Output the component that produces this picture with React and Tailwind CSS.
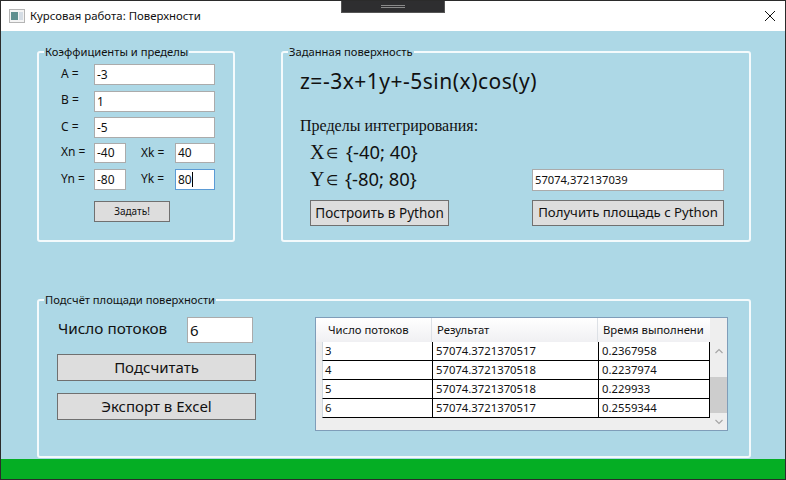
const font = "font-['Noto_Sans',sans-serif]";

function Group({ title, className, children }) {
  return (
    <fieldset className={`border-2 border-[#f4fafc] rounded-[3px] min-w-0 ${className}`}>
      <legend className="ml-[5px] px-[1px] text-[11.2px] leading-[16px] text-[#111]">{title}</legend>
      {children}
    </fieldset>
  );
}

function Field({ className, text, caret, focused, textClass = "text-[12px]" }) {
  return (
    <div className={`flex items-center bg-white border pl-[2px] ${focused ? "border-[#5b9bd5]" : "border-[#ababab]"} ${textClass} ${className}`}>
      <span>{text}</span>
      {caret && <span className="w-[1px] h-[15px] bg-black"></span>}
    </div>
  );
}

function Button({ className, children }) {
  return (
    <button className={`flex items-center justify-center whitespace-nowrap bg-[#dddddd] border border-[#707070] text-[#111] ${className}`}>
      {children}
    </button>
  );
}

const rows = [
  ["3", "57074.3721370517", "0.2367958"],
  ["4", "57074.3721370518", "0.2237974"],
  ["5", "57074.3721370518", "0.229933"],
  ["6", "57074.3721370517", "0.2559344"],
];

function CoeffGroup() {
  return (
    <Group title="Коэффициенты и пределы" className="w-[198px] h-[198px] shrink-0">
      <div className="flex flex-col pl-[22px] pt-[4px] text-[12px] text-[#111]">
        <div className="flex items-center h-[21px]">
          <span className="w-[33px] -mt-[2px]">A =</span>
          <Field className="w-[121px] h-[21px]" text="-3" />
        </div>
        <div className="flex items-center h-[21px] mt-[6px]">
          <span className="w-[33px] -mt-[4px]">B =</span>
          <Field className="w-[121px] h-[21px]" text="1" />
        </div>
        <div className="flex items-center h-[21px] mt-[5px]">
          <span className="w-[33px] -mt-[2px]">C =</span>
          <Field className="w-[121px] h-[21px]" text="-5" />
        </div>
        <div className="flex items-center h-[20px] mt-[5px]">
          <span className="w-[33px] -mt-[2px]">Xn =</span>
          <Field className="w-[32px] h-[20px]" text="-40" />
          <span className="w-[34px] ml-[15px]">Xk =</span>
          <Field className="w-[40px] h-[20px]" text="40" />
        </div>
        <div className="flex items-center h-[21px] mt-[6px]">
          <span className="w-[33px] -mt-[2px]">Yn =</span>
          <Field className="w-[32px] h-[21px]" text="-80" />
          <span className="w-[34px] ml-[15px] -mt-[2px]">Yk =</span>
          <Field className="w-[40px] h-[21px]" text="80" caret focused />
        </div>
        <Button className="w-[76px] h-[21px] mt-[11px] ml-[33px] text-[10px]">Задать!</Button>
      </div>
    </Group>
  );
}

function SurfaceGroup() {
  return (
    <Group title="Заданная поверхность" className="w-[470px] h-[198px] ml-[46px] shrink-0">
      <div className="flex flex-col pl-[17px] text-[#111]">
        <div className="text-[21px] tracking-[0.5px] leading-[28px] mt-[7px] whitespace-nowrap">z=-3x+1y+-5sin(x)cos(y)</div>
        <div className="font-['Liberation_Serif',serif] text-[16px] leading-[18px] mt-[22px]">Пределы интегрирования:</div>
        <div className="flex items-center h-[24px] mt-[5px] pl-[10px] text-[18.4px]">
          <span className="w-[16px] font-['Liberation_Serif',serif] text-[20px]">X</span>
          <span className="w-[20px] text-[14px]">∈</span>
          <span>{"{-40; 40}"}</span>
        </div>
        <div className="flex items-center h-[24px] mt-[3px] pl-[10px] text-[18.4px]">
          <span className="w-[16px] font-['Liberation_Serif',serif] text-[20px]">Y</span>
          <span className="w-[19px] text-[14px]">∈</span>
          <span className="w-[187px]">{"{-80; 80}"}</span>
          <Field className="w-[192px] h-[22px] mt-[2px]" text="57074,372137039" textClass="text-[11.2px]" />
        </div>
        <div className="flex items-center mt-[9px] pl-[10px]">
          <Button className="w-[139px] h-[26px] text-[13.5px]">Построить в Python</Button>
          <Button className="w-[192px] h-[26px] ml-[83px] text-[13.2px]">Получить площадь с Python</Button>
        </div>
      </div>
    </Group>
  );
}

function ResultsTable() {
  return (
    <div className="flex w-[413px] h-[114px] bg-[#eeeeee] border border-[#7f9db9] text-[11.3px] text-[#111]">
      <div className="flex flex-col w-[394px]">
        <div className="flex h-[24px] bg-gradient-to-b from-white to-[#f0f0f3]">
          <div className="w-[116px] pl-[12px] border-r border-[#dde1e6] flex items-center">Число потоков</div>
          <div className="w-[166px] pl-[5px] border-r border-[#dde1e6] flex items-center">Результат</div>
          <div className="flex-1 pl-[5px] flex items-center whitespace-nowrap overflow-hidden">Время выполнени</div>
        </div>
        {rows.map((row) => (
          <div key={row[0]} className="flex h-[19px] pl-[6px]">
            <div className="flex flex-1 bg-white border-b border-black border-l border-l-[#cfd8e0] border-r border-r-black">
              <div className="w-[110px] pl-[2px] border-r border-black flex items-center">{row[0]}</div>
              <div className="w-[166px] pl-[3px] border-r border-black flex items-center">{row[1]}</div>
              <div className="flex-1 pl-[3px] flex items-center">{row[2]}</div>
            </div>
          </div>
        ))}
      </div>
      <div className="flex flex-col items-center w-[17px]">
        <svg className="mt-[29px]" width="10" height="8" viewBox="0 0 10 8" fill="none" stroke="#a6a6a6" strokeWidth="1.2">
          <path d="M1.5 6 L5 2.5 L8.5 6" />
        </svg>
        <div className="w-full h-[36px] mt-[22px] bg-[#cdcdcd]"></div>
        <svg className="mt-[5px]" width="10" height="8" viewBox="0 0 10 8" fill="none" stroke="#a6a6a6" strokeWidth="1.2">
          <path d="M1.5 2 L5 5.5 L8.5 2" />
        </svg>
      </div>
    </div>
  );
}

function AreaGroup() {
  return (
    <Group title="Подсчёт площади поверхности" className="w-[714px] h-[166px] mt-[50px]">
      <div className="flex pl-[18px] pt-[9px] text-[#111]">
        <div className="flex flex-col w-[199px]">
          <div className="flex items-center h-[26px]">
            <span className="w-[130px] pl-[1px] text-[15.3px] -mt-[4px]">Число потоков</span>
            <Field className="w-[66px] h-[26px]" text="6" textClass="text-[15px]" />
          </div>
          <Button className="w-[199px] h-[27px] mt-[11px] text-[15px]">Подсчитать</Button>
          <Button className="w-[199px] h-[27px] mt-[12px] text-[15px]">Экспорт в Excel</Button>
        </div>
        <div className="ml-[59px]">
          <ResultsTable />
        </div>
      </div>
    </Group>
  );
}

export default function App() {
  return (
    <div className={`relative flex flex-col w-[786px] h-[480px] bg-[#add8e6] border-t border-b border-l border-r border-[#2b2b2b] overflow-hidden ${font}`}>
      {/* title bar */}
      <div className="flex items-center h-[30px] bg-white shrink-0">
        <svg className="ml-[8px]" width="16" height="14" viewBox="0 0 16 14">
          <rect x="0.5" y="0.5" width="15" height="13" fill="#f4f4f4" stroke="#b5b5b5" />
          <rect x="2" y="3" width="7" height="8" fill="#5f8f8f" />
          <rect x="10" y="3" width="4" height="8" fill="#d5dde5" />
        </svg>
        <span className="ml-[5px] text-[11.4px] text-[#111]">Курсовая работа: Поверхности</span>
        <svg className="ml-auto mr-[9px]" width="12" height="12" viewBox="0 0 12 12" stroke="#111" strokeWidth="1">
          <path d="M1 1 L11 11 M11 1 L1 11" />
        </svg>
      </div>

      {/* drag handle of the remote session */}
      <div className="absolute left-[340px] -top-[1px] flex items-center justify-center w-[104px] h-[13px] bg-[#2e2e30] border border-[#555]">
        <div className="w-[24px] h-[3px] border-t border-b border-[#8a8a8a]"></div>
      </div>

      <div className="flex-1 flex flex-col pl-[36px] pt-[13px]">
        <div className="flex">
          <CoeffGroup />
          <SurfaceGroup />
        </div>
        <AreaGroup />
      </div>

      <div className="h-[20px] bg-[#05ae24] shrink-0"></div>
    </div>
  );
}
